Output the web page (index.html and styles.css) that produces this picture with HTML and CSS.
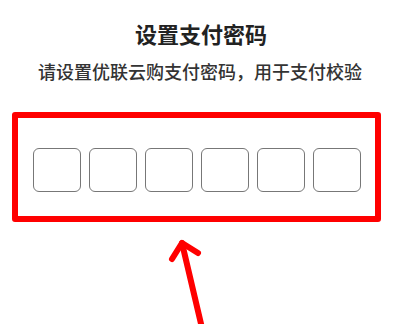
FILE: index.html
```html
<!DOCTYPE html>
<html lang="zh">
<head>
<meta charset="utf-8">
<title>设置支付密码</title>
<link rel="stylesheet" href="styles.css">
</head>
<body>
<main class="page">
  <h1 class="title">设置支付密码</h1>
  <p class="subtitle">请设置优联云购支付密码，用于支付校验</p>
  <section class="highlight">
    <div class="pin-row">
      <span class="pin-cell"></span>
      <span class="pin-cell"></span>
      <span class="pin-cell"></span>
      <span class="pin-cell"></span>
      <span class="pin-cell"></span>
      <span class="pin-cell"></span>
    </div>
  </section>
  <svg class="arrow" width="400" height="102" viewBox="0 0 400 102" aria-hidden="true">
    <path d="M202 106 L182 21" />
    <path d="M172 37 L182 21 L198 31" />
  </svg>
</main>
</body>
</html>
```

FILE: styles.css
```css
html, body {
  margin: 0;
  padding: 0;
  background: #ffffff;
}
body {
  font-family: "Noto Sans CJK SC", "Noto Sans", sans-serif;
  color: #222222;
  width: 400px;
  height: 324px;
  overflow: hidden;
}
.page {
  display: flex;
  flex-direction: column;
  align-items: stretch;
}
.title {
  margin: 18px 0 0;
  font-size: 22px;
  line-height: 30px;
  font-weight: 700;
  text-align: center;
  padding-left: 2px;
  color: #222222;
}
.subtitle {
  margin: 11px 0 0;
  font-size: 18px;
  line-height: 24px;
  font-weight: 500;
  text-align: center;
  color: #333333;
}
.highlight {
  box-sizing: border-box;
  margin: 29px 0 0 12px;
  width: 369px;
  height: 110px;
  border: 6px solid #ff0000;
  border-radius: 3px;
  padding-top: 30px;
}
.pin-row {
  display: flex;
  justify-content: center;
  gap: 8px;
  padding-left: 1px;
}
.pin-cell {
  box-sizing: border-box;
  width: 48px;
  height: 44px;
  border: 1.5px solid #777777;
  border-radius: 6px;
  background: #ffffff;
}
.arrow {
  display: block;
  fill: none;
  stroke: #ff0000;
  stroke-width: 6;
  stroke-linecap: round;
  stroke-linejoin: round;
}
```
